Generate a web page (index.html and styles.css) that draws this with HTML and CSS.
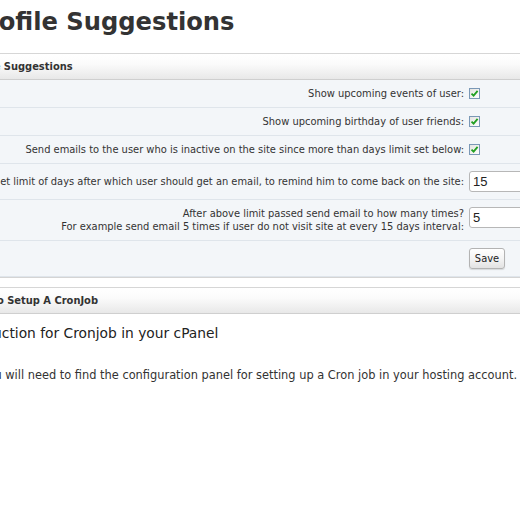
FILE: index.html
```html
<!DOCTYPE html>
<html>
<head>
<meta charset="utf-8">
<title>Profile Suggestions</title>
<link rel="stylesheet" href="styles.css">
</head>
<body>
<div class="page">
  <h1 class="title">Profile Suggestions</h1>

  <section class="panel panel-form">
    <h2 class="panel-head">Profile Suggestions</h2>
    <table class="form">
      <tr>
        <td class="lbl">Show upcoming events of user:</td>
        <td class="fld"><span class="check"><svg viewBox="0 0 9 9" width="9" height="9"><path d="M1.5 4.6 L3.6 6.7 L7.6 1.9" fill="none" stroke="#22a022" stroke-width="1.8"/></svg></span></td>
      </tr>
      <tr>
        <td class="lbl">Show upcoming birthday of user friends:</td>
        <td class="fld"><span class="check"><svg viewBox="0 0 9 9" width="9" height="9"><path d="M1.5 4.6 L3.6 6.7 L7.6 1.9" fill="none" stroke="#22a022" stroke-width="1.8"/></svg></span></td>
      </tr>
      <tr>
        <td class="lbl">Send emails to the user who is inactive on the site since more than days limit set below:</td>
        <td class="fld"><span class="check"><svg viewBox="0 0 9 9" width="9" height="9"><path d="M1.5 4.6 L3.6 6.7 L7.6 1.9" fill="none" stroke="#22a022" stroke-width="1.8"/></svg></span></td>
      </tr>
      <tr>
        <td class="lbl">Set limit of days after which user should get an email, to remind him to come back on the site:</td>
        <td class="fld"><input class="txt" type="text" value="15"></td>
      </tr>
      <tr>
        <td class="lbl">After above limit passed send email to how many times?<br>For example send email 5 times if user do not visit site at every 15 days interval:</td>
        <td class="fld top"><input class="txt" type="text" value="5"></td>
      </tr>
      <tr>
        <td class="lbl"></td>
        <td class="fld"><button class="btn" type="button">Save</button></td>
      </tr>
    </table>
  </section>

  <section class="panel">
    <h2 class="panel-head">How To Setup A CronJob</h2>
    <div class="panel-body">
      <h3 class="sub">Instruction for Cronjob in your cPanel</h3>
      <p class="text">You will need to find the configuration panel for setting up a Cron job in your hosting account.</p>
    </div>
  </section>
</div>
</body>
</html>
```

FILE: styles.css
```css
html, body {
  margin: 0;
  padding: 0;
  overflow: hidden;
  background: #ffffff;
}

body {
  font-family: "DejaVu Sans Condensed", "DejaVu Sans", sans-serif;
  font-stretch: condensed;
  font-size: 11px;
  color: #333333;
}

.page {
  width: 660px;
  margin-left: -58px;
}

.title {
  margin: 0 0 17px 27px;
  padding-top: 8px;
  font-family: "DejaVu Sans", sans-serif;
  font-stretch: normal;
  font-weight: bold;
  font-size: 24.2px;
  line-height: 28px;
  color: #333333;
}

.panel {
  margin-bottom: 9px;
}

.panel-form {
  border-bottom: 1px solid #d4d4d4;
}

.panel-head {
  margin: 0;
  height: 25px;
  line-height: 25px;
  padding-left: 22px;
  font-size: 11px;
  font-weight: bold;
  color: #333333;
  background: linear-gradient(#ffffff, #fbfbfb 40%, #e8e8e8);
  border-top: 1px solid #d6d6d6;
  border-bottom: 1px solid #cfcfcf;
}

.form {
  width: 100%;
  border-collapse: collapse;
  background: #f3f6f9;
}

.form td {
  border-bottom: 1px solid #dfe5eb;
  line-height: 13px;
  vertical-align: middle;
}

.lbl {
  text-align: right;
  padding: 7px 2px 7px 0;
  color: #333333;
}

.fld {
  width: 133px;
  padding: 7px 0 7px 3px;
}

.fld.top {
  vertical-align: top;
}

.check {
  display: inline-block;
  vertical-align: middle;
  width: 9px;
  height: 9px;
  border: 1px solid #7a98b6;
  background: linear-gradient(135deg, #e4e4e0, #ffffff);
  line-height: 0;
  margin-top: -2px;
}

.check svg {
  display: block;
}

.txt {
  display: block;
  box-sizing: border-box;
  width: 125px;
  height: 21px;
  margin: 0;
  padding: 0 3px;
  border: 1px solid #b7b7b7;
  border-radius: 3px;
  background: #ffffff;
  font-family: "Liberation Sans", Arial, sans-serif;
  font-size: 13px;
  color: #222222;
}

.btn {
  display: block;
  box-sizing: border-box;
  width: 36px;
  height: 21px;
  margin: 0;
  padding: 0;
  border: 1px solid #b3b3b3;
  border-radius: 3px;
  background: linear-gradient(#ffffff, #f4f4f4 50%, #e2e2e2);
  box-shadow: 0 1px 1px rgba(0, 0, 0, 0.12);
  font-family: "DejaVu Sans Condensed", "DejaVu Sans", sans-serif;
  font-stretch: condensed;
  font-size: 11px;
  color: #222222;
}

.panel-body {
  background: #ffffff;
  padding: 10px 0 40px 20px;
  font-family: "DejaVu Sans", sans-serif;
  font-stretch: normal;
}

.sub {
  margin: 0 0 26px 0;
  font-size: 13.8px;
  font-weight: normal;
  line-height: 18px;
  color: #222222;
}

.text {
  margin: 0;
  padding-left: 20px;
  font-size: 11.4px;
  line-height: 14px;
  color: #333333;
}
```
